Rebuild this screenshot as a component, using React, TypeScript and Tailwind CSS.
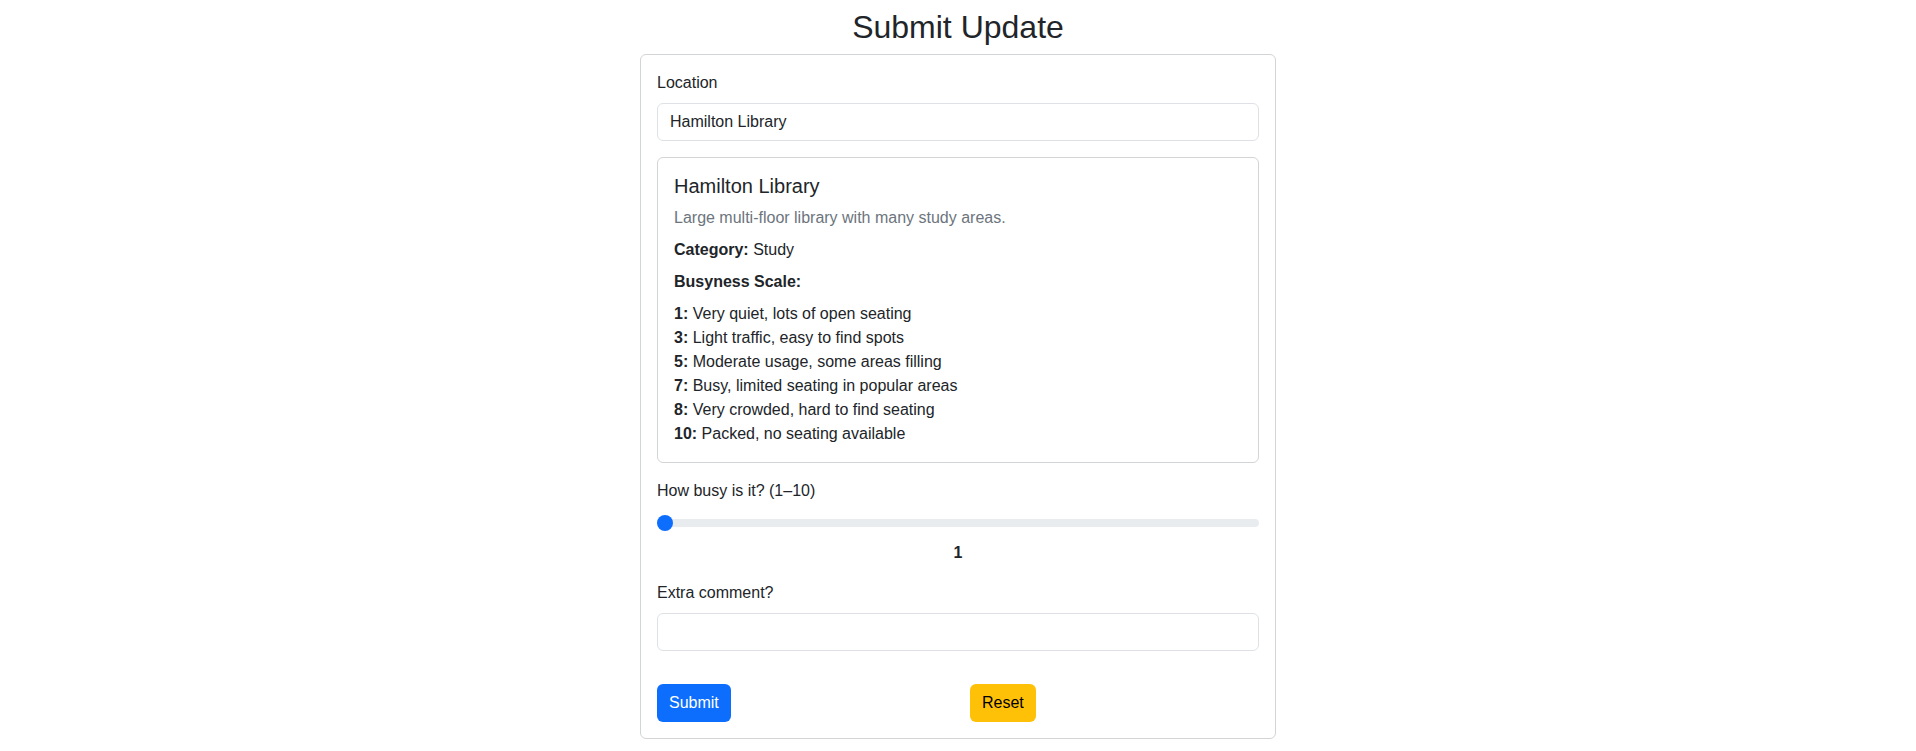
import { useState } from "react";

const scale: { level: string; text: string }[] = [
  { level: "1", text: "Very quiet, lots of open seating" },
  { level: "3", text: "Light traffic, easy to find spots" },
  { level: "5", text: "Moderate usage, some areas filling" },
  { level: "7", text: "Busy, limited seating in popular areas" },
  { level: "8", text: "Very crowded, hard to find seating" },
  { level: "10", text: "Packed, no seating available" },
];

export default function App() {
  const [location, setLocation] = useState("Hamilton Library");
  const [busy, setBusy] = useState(1);
  const [comment, setComment] = useState("");

  const reset = () => {
    setLocation("Hamilton Library");
    setBusy(1);
    setComment("");
  };

  return (
    <div className="min-h-screen bg-white pt-2 font-['Liberation_Sans',Arial,sans-serif] text-base leading-6 text-[#212529]">
      <h2 className="mb-2 text-center text-[32px] font-medium leading-[1.2]">Submit Update</h2>

      <form
        className="mx-auto w-[636px] rounded-[6px] border border-[#d3d4d5] p-4"
        onSubmit={(e) => e.preventDefault()}
      >
        <label className="mb-2 block" htmlFor="location">
          Location
        </label>
        <input
          id="location"
          className="mb-4 block h-[38px] w-full rounded-[6px] border border-[#dee2e6] px-3 outline-none"
          value={location}
          onChange={(e) => setLocation(e.target.value)}
        />

        <div className="mb-4 rounded-[6px] border border-[#d3d4d5] p-4">
          <h5 className="mb-2 text-[20px] font-medium leading-[1.2]">Hamilton Library</h5>
          <p className="mb-2 text-[#6c757d]">Large multi-floor library with many study areas.</p>
          <p className="mb-2">
            <strong className="font-bold">Category:</strong> Study
          </p>
          <p className="mb-2">
            <strong className="font-bold">Busyness Scale:</strong>
          </p>
          <ul>
            {scale.map((s) => (
              <li key={s.level}>
                <strong className="font-bold">{s.level}:</strong> {s.text}
              </li>
            ))}
          </ul>
        </div>

        <div className="mb-4">
          <label className="mb-2 block" htmlFor="busy">
            How busy is it? (1–10)
          </label>
          <input
            id="busy"
            type="range"
            min={1}
            max={10}
            value={busy}
            onChange={(e) => setBusy(Number(e.target.value))}
            className="block h-6 w-full cursor-pointer appearance-none bg-transparent outline-none [&::-webkit-slider-runnable-track]:h-2 [&::-webkit-slider-runnable-track]:rounded-full [&::-webkit-slider-runnable-track]:bg-[#e9ecef] [&::-webkit-slider-thumb]:-mt-1 [&::-webkit-slider-thumb]:h-4 [&::-webkit-slider-thumb]:w-4 [&::-webkit-slider-thumb]:appearance-none [&::-webkit-slider-thumb]:rounded-full [&::-webkit-slider-thumb]:bg-[#0d6efd] [&::-moz-range-track]:h-2 [&::-moz-range-track]:rounded-full [&::-moz-range-track]:bg-[#e9ecef] [&::-moz-range-thumb]:h-4 [&::-moz-range-thumb]:w-4 [&::-moz-range-thumb]:rounded-full [&::-moz-range-thumb]:border-0 [&::-moz-range-thumb]:bg-[#0d6efd]"
          />
          <div className="mt-[6px] text-center font-bold">{busy}</div>
        </div>

        <div className="mb-4">
          <label className="mb-2 block" htmlFor="comment">
            Extra comment?
          </label>
          <input
            id="comment"
            className="block h-[38px] w-full rounded-[6px] border border-[#dee2e6] px-3 outline-none"
            value={comment}
            onChange={(e) => setComment(e.target.value)}
          />
        </div>

        <div className="mt-[33px] grid grid-cols-2 gap-6">
          <div>
            <button
              type="submit"
              className="h-[38px] rounded-[6px] bg-[#0d6efd] px-3 text-white"
            >
              Submit
            </button>
          </div>
          <div>
            <button
              type="button"
              onClick={reset}
              className="h-[38px] rounded-[6px] bg-[#ffc107] px-3 text-black"
            >
              Reset
            </button>
          </div>
        </div>
      </form>
    </div>
  );
}
